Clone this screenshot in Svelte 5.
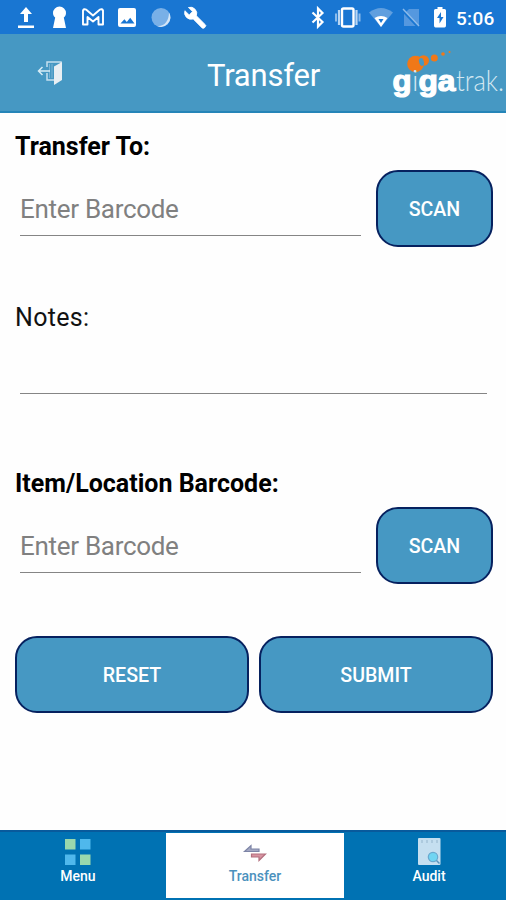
<script lang="ts">
type Tab = "menu" | "transfer" | "audit";

let active = $state<Tab>("transfer");
let transferTo = $state("");
let notes = $state("");
let barcode = $state("");

const TABS: { id: Tab; label: string }[] = [
  { id: "menu", label: "Menu" },
  { id: "transfer", label: "Transfer" },
  { id: "audit", label: "Audit" },
];

function reset() {
  transferTo = "";
  notes = "";
  barcode = "";
}
</script>

<div class="screen">
  <div class="status">
    <svg width="220" height="34" viewBox="0 0 220 34" fill="#fff" aria-hidden="true">
      <!-- upload -->
      <path d="M26 7l6 7h-4v8h-4v-8h-4zM18 25.500h16v2.500H18z" />
      <!-- keyhole -->
      <path d="M59.500 6.500a6.500 6.500 0 0 1 6.500 6.500c0 2-1 3.500-2.200 4.500L66 28H53l2.200-10.500C54 16.500 53 15 53 13a6.500 6.500 0 0 1 6.500-6.500z" />
      <!-- mail -->
      <path d="M83 24.500V10.500q1-2 3-1l7 6 7-6q2-1 3 1v14h-4.500V17L93 21.500 87.500 17v7.500z" fill="none" stroke="#fff" stroke-width="1.900" stroke-linejoin="round" />
      <!-- picture -->
      <path fill-rule="evenodd" d="M120 8h14q2 0 2 2v15q0 2-2 2h-14q-2 0-2-2V10q0-2 2-2zM120.500 23.500h14l-4.300-5.700-3.400 4.200-2.400-2.800z" />
      <circle cx="161" cy="17.500" r="9.500" fill="#79b0e7" />
      <path d="M169 12.500a9.500 9.500 0 0 1-12 13.500c7 1 12-5 12-13.500z" fill="#d5e6f7" />
      <!-- wrench -->
      <path d="M205.300 24.700l-8.900-8.900a6.400 6.400 0 0 0-8-8.300l4.100 4.100-3.300 3.300-4.300-4.200a6.600 6.600 0 0 0 8.300 8.300l8.900 8.900q1.200.8 2.200 0l1.200-1.400q.8-1-.2-1.800z" stroke="#fff" stroke-width=".8" />
    </svg>
    <div class="right">
      <svg width="160" height="34" viewBox="296 0 160 34" fill="#fff" aria-hidden="true">
        <!-- bluetooth -->
        <path d="M312.500 12.500l10 9.500-4.500 4.500v-18l4.500 4.500-10 9.500" fill="none" stroke="#fff" stroke-width="2.200" />
        <!-- vibrate -->
        <rect x="342" y="8.500" width="11.500" height="18" rx="1.500" fill="none" stroke="#fff" stroke-width="2.400" />
        <path d="M339 10v15M356.500 10v15" stroke="#b9d6f3" stroke-width="2.200" />
        <path d="M336 13.500v8M359.500 13.500v8" stroke="#8dbbea" stroke-width="2" />
        <!-- wifi -->
        <path d="M369 12.500q12-9 24 0L381 27z" fill="#609fdf" />
        <path d="M374.500 18q6.500-4 13 0L381 27z" />
        <path d="M378.500 19h5l-2.500 4z" fill="#1976d2" />
        <!-- no sim -->
        <path d="M409 9h10v17h-15V14z" fill="#5598df" />
        <path d="M403 11l16 17" stroke="#1976d2" stroke-width="2.500" />
        <path d="M403 9l16 17" stroke="#8dbbea" stroke-width="1.400" />
        <!-- battery -->
        <path d="M437.500 7h5v2h2q1.500 0 1.500 1.500v15q0 2-1.500 2h-9q-1.500 0-1.500-2v-15q0-1.500 1.500-1.500h2z" />
        <path d="M441 12l-4 6h2.500v5.500l4-6.500H441z" fill="#1976d2" />
      </svg>
      <span class="clock">5:06</span>
    </div>
  </div>

  <header>
    <button class="exit" aria-label="Exit">
      <svg width="28" height="28" viewBox="0 0 28 28" fill="none" aria-hidden="true">
        <path d="M11 8V3h14v15M11 14v7h7" stroke="#c5e0ef" stroke-width="1.500" />
        <path d="M13.500 5v14M16 5v14" stroke="#78b4d5" stroke-width="1" />
        <path d="M18 7.500L26 3v18l-8 5z" fill="#e9eff3" />
        <path d="M14 12H2.500M6.500 8l-4 4 4 4" stroke="#d8edf6" stroke-width="1.500" />
      </svg>
    </button>
    <h1>Transfer</h1>
    <svg class="logo" width="118" height="54" viewBox="388 46 118 54" aria-label="gigatrak">
      <g fill="#f07818">
        <circle cx="415.500" cy="64" r="8.300" />
        <ellipse cx="423.500" cy="60.500" rx="5.500" ry="5.200" />
        <circle cx="434.300" cy="58" r="3.500" />
        <circle cx="443" cy="54" r="1.800" />
        <circle cx="449.500" cy="52" r="1" />
      </g>
      <ellipse cx="421.500" cy="62" rx="2.400" ry="4" fill="#4698c3" transform="rotate(-15 421.500 62)" />
      <g fill="#fff">
        <text class="heavy" x="392.500" y="90.500" textLength="19" lengthAdjust="spacingAndGlyphs">g</text>
        <text class="thin" x="412" y="90.500">i</text>
        <text class="heavy" x="418.500" y="90.500" textLength="37" lengthAdjust="spacingAndGlyphs">ga</text>
        <text class="thin" x="456" y="90.500" textLength="48" lengthAdjust="spacingAndGlyphs">trak.</text>
      </g>
    </svg>
  </header>

  <main>
    <label class="title" for="to">Transfer To:</label>
    <div class="row">
      <input id="to" placeholder="Enter Barcode" bind:value={transferTo} />
      <button class="btn">SCAN</button>
    </div>

    <label class="title plain" for="notes">Notes:</label>
    <div class="notes">
      <input id="notes" bind:value={notes} />
    </div>

    <label class="title" for="item">Item/Location Barcode:</label>
    <div class="row">
      <input id="item" placeholder="Enter Barcode" bind:value={barcode} />
      <button class="btn">SCAN</button>
    </div>

    <div class="actions">
      <button class="btn" onclick={reset}>RESET</button>
      <button class="btn">SUBMIT</button>
    </div>
  </main>

  <nav>
    {#each TABS as tab}
      <button class="tab" class:active={active === tab.id} onclick={() => (active = tab.id)}>
        <svg width="28" height="30" viewBox="0 0 28 30" aria-hidden="true">
          {#if tab.id === "menu"}
            <path d="M1 2h10.500v10.500H1zM16 17.500h10.500V28H16z" fill="#99d8ad" />
            <path d="M16 2h10.500v10.500H16zM1 17.500h10.500V28H1z" fill="#4fb8ec" />
          {:else if tab.id === "transfer"}
            <path d="M18 14.500H3.500L10 8.500v3.500h8z" fill="#a3a8c3" stroke="#7d84a6" stroke-width="1.200" />
            <path d="M10.500 17h14l-6.500 6.500V20h-7.500z" fill="#d793a1" stroke="#b3707f" stroke-width="1.200" />
          {:else}
            <rect x="3" y="1" width="22.500" height="27" rx="1" fill="#c5dff0" />
            <path d="M7 3v3M12 3v3M17 3v3M22 3v3" stroke="#9dbdd2" stroke-width="1.200" />
            <circle cx="18" cy="20" r="4.700" fill="#70d5f2" stroke="#69a9cf" stroke-width="1.200" />
            <path d="M21.500 23.500l3 3" stroke="#5a94bc" stroke-width="1.500" />
          {/if}
        </svg>
        <span>{tab.label}</span>
      </button>
    {/each}
  </nav>
</div>

<style>
  :global(body) {
    margin: 0;
    background: #fff;
  }
  .screen {
    display: flex;
    flex-direction: column;
    width: 506px;
    height: 900px;
    overflow: hidden;
    background: #fefefe;
    font-family: Roboto, "Liberation Sans", sans-serif;
  }
  button {
    font: inherit;
    padding: 0;
    border: 0;
    background: none;
  }
  .status {
    display: flex;
    justify-content: space-between;
    height: 34px;
    background: #1976d2;
    color: #fff;
  }
  .right {
    display: flex;
    align-items: center;
    width: 210px;
  }
  .clock {
    margin-top: 3px;
    font-size: 19px;
    font-weight: 500;
    letter-spacing: 0.3px;
  }
  header {
    display: grid;
    grid-template-columns: 194px 1fr 118px;
    align-items: center;
    box-sizing: border-box;
    height: 79px;
    border-bottom: 2px solid #2585b8;
    background: #4698c3;
    color: #fff;
  }
  .exit {
    display: flex;
    padding-left: 36px;
  }
  h1 {
    margin: 6px 0 0 13px;
    font-size: 31px;
    font-weight: 400;
    line-height: 36px;
    letter-spacing: -0.2px;
  }
  .logo {
    align-self: start;
    margin-top: 12px;
    overflow: visible;
  }
  .heavy {
    font: 700 29px "Liberation Sans", sans-serif;
    stroke: #fff;
    stroke-width: 1.2px;
  }
  .thin {
    font: 300 29px Lato, "Liberation Sans", sans-serif;
    fill: #d4e8f2;
  }
  main {
    display: flex;
    flex: 1;
    flex-direction: column;
    padding: 19px 13px 0 15px;
  }
  .title {
    font-size: 25px;
    font-weight: 700;
    line-height: 30px;
    color: #000;
  }
  .title.plain {
    margin-top: 56px;
    font-weight: 400;
    letter-spacing: 0.3px;
    color: #111;
  }
  .row {
    display: flex;
    gap: 15px;
    height: 77px;
    margin-top: 8px;
    padding-left: 5px;
  }
  input {
    flex: 1;
    box-sizing: border-box;
    min-width: 0;
    height: 66px;
    padding: 12px 0 0;
    border: 0;
    border-bottom: 1.500px solid #858585;
    border-radius: 0;
    background: transparent;
    font: 26px/32px Roboto, sans-serif;
    letter-spacing: -0.3px;
    color: #222;
    outline: none;
  }
  input::placeholder {
    color: #808080;
    opacity: 1;
  }
  .btn {
    box-sizing: border-box;
    width: 117px;
    height: 77px;
    padding-top: 2px;
    border: 2px solid #06215f;
    border-radius: 22px;
    background: #4698c3;
    font-size: 19.600px;
    font-weight: 500;
    color: #fff;
  }
  .notes {
    display: flex;
    margin: 0 6px 75px 5px;
  }
  .notes input {
    height: 61px;
  }
  .actions {
    display: grid;
    grid-template-columns: 1fr 1fr;
    gap: 10px;
    margin-top: 52px;
  }
  .actions .btn {
    width: 100%;
  }
  nav {
    display: grid;
    grid-template-columns: 166px 178px 1fr;
    box-sizing: border-box;
    height: 70px;
    padding: 1px 0 2px;
    border-top: 2px solid #085a9c;
    background: #0072b3;
  }
  .tab {
    display: flex;
    flex-direction: column;
    align-items: center;
    padding-top: 4px;
    font-size: 14px;
    font-weight: 500;
    line-height: 18px;
    color: #fff;
  }
  .tab:first-child {
    padding-right: 10px;
  }
  .tab:last-child {
    padding-left: 8px;
  }
  .tab.active {
    background: #fff;
    color: #4b91bd;
  }
</style>
